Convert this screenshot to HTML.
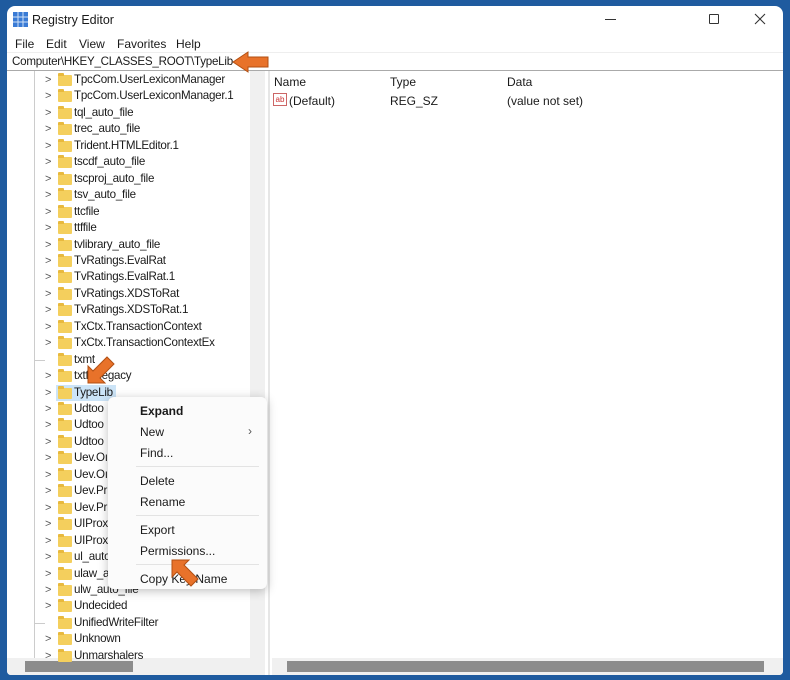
<!DOCTYPE html>
<html><head><style>
*{margin:0;padding:0;box-sizing:border-box}
body{width:790px;height:680px;background:#1f5b9f;position:relative;overflow:hidden;font-family:"Liberation Sans",sans-serif;font-size:12px;color:#1a1a1a}
.win{position:absolute;left:7px;top:6px;width:776px;height:669px;background:#fff;border-radius:8px 8px 4px 4px;overflow:hidden}
.abs{position:absolute}
.row{position:absolute;left:0;height:16px;line-height:16px;white-space:nowrap}
.chev{position:absolute;left:38px;top:0;color:#555;font-size:11px}
.fold{position:absolute;left:51px;top:3px;width:14px;height:11px;background:#f4cf5d;border-radius:1px}
.fold:before{content:"";position:absolute;left:0;top:-2px;width:6px;height:3px;background:#e8b93e;border-radius:1px 1px 0 0}
.txt{position:absolute;left:67px;top:0;font-size:11.6px;letter-spacing:-0.25px}
.menu{position:absolute;left:101px;top:391px;width:159px;height:192px;background:#fbfbfb;border-radius:6px;box-shadow:0 2px 10px rgba(0,0,0,.25)}
.mi{position:absolute;left:32px;font-size:12px}
.sep{position:absolute;left:28px;right:8px;height:1px;background:#e3e3e3}
</style></head><body>
<div class="win">
 <svg class="abs" style="left:6px;top:6px" width="15" height="15"><rect x="0" y="0" width="15" height="15" fill="#3a7bd5"/><path d="M5 0v15M10 0v15M0 5h15M0 10h15" stroke="#cfe0f7" stroke-width="1"/></svg>
 <div class="abs" style="left:25px;top:7px;font-size:12.5px">Registry Editor</div>
 <div class="abs" style="left:598px;top:13px;width:11px;height:1px;background:#333"></div>
 <div class="abs" style="left:702px;top:8px;width:10px;height:10px;border:1px solid #333;border-radius:1px"></div>
 <svg class="abs" style="left:747px;top:7px" width="12" height="12"><path d="M1 1L11 11M11 1L1 11" stroke="#333" stroke-width="1.1"/></svg>
 <div class="abs" style="left:8px;top:31px">File</div>
 <div class="abs" style="left:39px;top:31px">Edit</div>
 <div class="abs" style="left:72px;top:31px">View</div>
 <div class="abs" style="left:110px;top:31px">Favorites</div>
 <div class="abs" style="left:169px;top:31px">Help</div>
 <div class="abs" style="left:0;top:46px;width:776px;height:1px;background:#eee"></div>
 <div class="abs" style="left:5px;top:49px;font-size:11.6px;letter-spacing:-0.25px">Computer\HKEY_CLASSES_ROOT\TypeLib</div>
 <div class="abs" style="left:0;top:64px;width:776px;height:1px;background:#aaa"></div>
 <div class="abs" style="left:243px;top:65px;width:15px;height:588px;background:#f0f0f0"></div>
 <div class="abs" style="left:261px;top:65px;width:2px;height:604px;background:#e6e6e6"></div>
 <div class="abs" style="left:27px;top:65px;width:1px;height:588px;background:#ccc"></div>
 <div class="abs" style="left:0;top:652px;width:258px;height:17px;background:#f0f0f0"></div>
 <div class="abs" style="left:18px;top:655px;width:108px;height:11px;background:#8c8c8c"></div>
 <div class="abs" style="left:265px;top:652px;width:511px;height:17px;background:#f0f0f0"></div>
 <div class="abs" style="left:280px;top:655px;width:477px;height:11px;background:#8c8c8c"></div>
 <div class="abs" style="left:267px;top:69px">Name</div>
 <div class="abs" style="left:383px;top:69px">Type</div>
 <div class="abs" style="left:500px;top:69px">Data</div>
 <div class="abs" style="left:266px;top:87px;width:14px;height:13px;border:1px solid #c66;font-size:8px;color:#c33;line-height:11px;text-align:center">ab</div>
 <div class="abs" style="left:282px;top:88px">(Default)</div>
 <div class="abs" style="left:383px;top:88px">REG_SZ</div>
 <div class="abs" style="left:500px;top:88px">(value not set)</div>
 <div class="abs" style="left:49px;top:379px;width:60px;height:16px;background:#cce4f7"></div>
 <div id="tree"></div>
 <div class="menu">
  <div class="mi" style="top:7px;font-weight:bold">Expand</div>
  <div class="mi" style="top:28px">New</div><div class="abs" style="left:140px;top:27px;color:#555">›</div>
  <div class="mi" style="top:49px">Find...</div>
  <div class="sep" style="top:69px"></div>
  <div class="mi" style="top:77px">Delete</div>
  <div class="mi" style="top:98px">Rename</div>
  <div class="sep" style="top:118px"></div>
  <div class="mi" style="top:126px">Export</div>
  <div class="mi" style="top:147px">Permissions...</div>
  <div class="sep" style="top:167px"></div>
  <div class="mi" style="top:175px">Copy Key Name</div>
 </div>
</div>
<svg class="abs" style="left:0;top:0" width="790" height="680">
 <path d="M233 62 L248 52 L248 57 L268 57 L268 67 L248 67 L248 72 Z" fill="#e8722a" stroke="#b24f12" stroke-width="1"/>
 <path d="M88 383 L88 366 L93 371 L107 357 L114 364 L100 378 L105 383 Z" fill="#e8722a" stroke="#b24f12" stroke-width="1"/>
 <path d="M172 560 L189 560 L184 565 L198 579 L191 586 L177 572 L172 577 Z" fill="#e8722a" stroke="#b24f12" stroke-width="1"/>
</svg>
<script>
var n=["TpcCom.UserLexiconManager","TpcCom.UserLexiconManager.1","tql_auto_file","trec_auto_file","Trident.HTMLEditor.1","tscdf_auto_file","tscproj_auto_file","tsv_auto_file","ttcfile","ttffile","tvlibrary_auto_file","TvRatings.EvalRat","TvRatings.EvalRat.1","TvRatings.XDSToRat","TvRatings.XDSToRat.1","TxCtx.TransactionContext","TxCtx.TransactionContextEx","txmt","txtfilelegacy","TypeLib","Udtoo","Udtoo","Udtoo","Uev.Oı","Uev.Oı","Uev.Pr","Uev.Pr","UIProx","UIProx","ul_auto","ulaw_a","ulw_auto_file","Undecided","UnifiedWriteFilter","Unknown","Unmarshalers"];
var nochev={17:1,33:1};var h="";
n.forEach(function(t,i){var y=Math.round(66+i*16.45);
h+='<div class="row" style="top:'+y+'px;width:240px">'+(nochev[i]?'<div class="abs" style="left:28px;top:8px;width:10px;height:1px;background:#ccc"></div>':'<span class="chev">&gt;</span>')+'<span class="fold"></span><span class="txt">'+t+'</span></div>';});
document.getElementById("tree").innerHTML=h;
</script>
</body></html>
